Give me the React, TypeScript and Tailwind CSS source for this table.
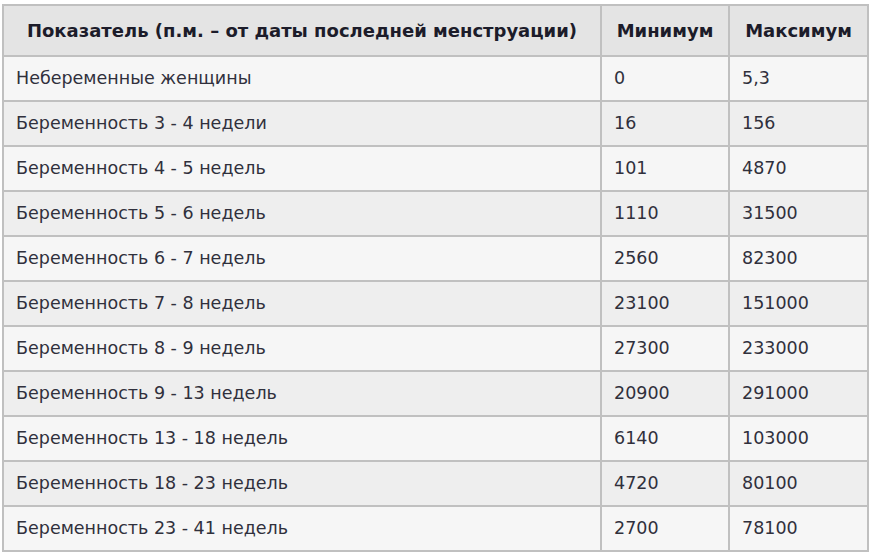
const rows: Array<[string, string, string]> = [
  ["Небеременные женщины", "0", "5,3"],
  ["Беременность 3 - 4 недели", "16", "156"],
  ["Беременность 4 - 5 недель", "101", "4870"],
  ["Беременность 5 - 6 недель", "1110", "31500"],
  ["Беременность 6 - 7 недель", "2560", "82300"],
  ["Беременность 7 - 8 недель", "23100", "151000"],
  ["Беременность 8 - 9 недель", "27300", "233000"],
  ["Беременность 9 - 13 недель", "20900", "291000"],
  ["Беременность 13 - 18 недель", "6140", "103000"],
  ["Беременность 18 - 23 недель", "4720", "80100"],
  ["Беременность 23 - 41 недель", "2700", "78100"],
];

export default function App() {
  return (
    <div className="w-[870px] h-[556px] bg-white pt-[4px] pl-[2px] font-['DejaVu_Sans',sans-serif]">
      <table className="border-collapse w-[865px] table-fixed text-[17.5px]">
        <colgroup>
          <col className="w-[598px]" />
          <col className="w-[128px]" />
          <col className="w-[139px]" />
        </colgroup>
        <thead>
          <tr className="h-[51px] bg-[#e4e4e4] text-[#1c1c2a] text-[18px]">
            <th className="border-2 border-[#c0c0c0] font-bold text-center">
              Показатель (п.м. – от даты последней менструации)
            </th>
            <th className="border-2 border-[#c0c0c0] font-bold text-center">Минимум</th>
            <th className="border-2 border-[#c0c0c0] font-bold text-center">Максимум</th>
          </tr>
        </thead>
        <tbody>
          {rows.map((r, i) => (
            <tr
              key={r[0]}
              className={`h-[45px] text-[#30303c] ${i % 2 === 0 ? "bg-[#f6f6f6]" : "bg-[#eeeeee]"}`}
            >
              <td className="border-2 border-[#c0c0c0] pl-[12px]">{r[0]}</td>
              <td className="border-2 border-[#c0c0c0] pl-[12px]">{r[1]}</td>
              <td className="border-2 border-[#c0c0c0] pl-[12px]">{r[2]}</td>
            </tr>
          ))}
        </tbody>
      </table>
    </div>
  );
}
